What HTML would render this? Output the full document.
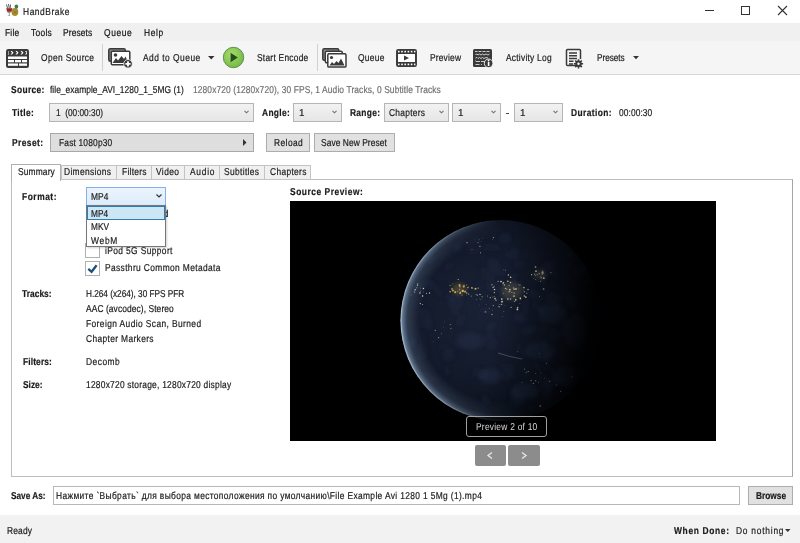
<!DOCTYPE html>
<html><head><meta charset="utf-8"><style>*{margin:0;padding:0;box-sizing:border-box}
html,body{width:800px;height:543px;overflow:hidden;background:#fff;font-family:"Liberation Sans",sans-serif;font-size:10px;color:#000}
.a{position:absolute;white-space:nowrap}
.t{font-size:10px;line-height:12px;text-rendering:geometricPrecision;-webkit-text-stroke:0.2px currentColor}
.r{position:absolute}
svg{position:absolute;overflow:visible}
</style></head><body>
<div class="r" style="left:0;top:0;width:800px;height:23px;background:#fff"></div>
<div class="r" style="left:0;top:23px;width:800px;height:18px;background:#f0f0f0"></div>
<div class="r" style="left:0;top:41px;width:800px;height:34px;background:#f5f5f5;border-bottom:1px solid #d7d7d7"></div>
<div class="r" style="left:0;top:515px;width:800px;height:28px;background:#f2f2f2"></div>
<svg style="left:5px;top:3px" width="15" height="15" viewBox="0 0 15 15">
<filter id="lb"><feGaussianBlur stdDeviation="0.35"/></filter>
<g filter="url(#lb)">
<path d="M1.5 1.5 L2.5 5 M3.5 1 L4.2 5 M5.5 1.5 L5.2 5" stroke="#5a5a5a" stroke-width="1"/>
<path d="M1.2 5 L7.5 5 L6.5 9 L4.6 10 L4.6 12.5 L6 13 L2.5 13 L3.8 12.5 L3.8 10 L2 9 Z" fill="#8a8a80"/>
<path d="M1.6 5.5 L7.2 5.5 L6.4 8.6 L2.3 8.6 Z" fill="#a8231f"/>
<ellipse cx="9.9" cy="9" rx="3.4" ry="3.9" fill="#a88e30"/>
<path d="M8.2 7.5 L11.5 10.8 M8.5 11 L11.8 7.7" stroke="#7d6820" stroke-width="0.6"/>
<ellipse cx="11.4" cy="3.6" rx="1.8" ry="2.2" fill="#3d7a52"/>
</g></svg>
<div class="a t" style="left:22.50px;top:6.50px;color:#1a1a1a;letter-spacing:0.666px;transform:scaleX(0.8400);transform-origin:0.00px 0;">HandBrake</div>

<div class="r" style="left:705px;top:10px;width:9px;height:1px;background:#333"></div>
<div class="r" style="left:741px;top:6px;width:9px;height:9px;border:1px solid #333"></div>
<svg style="left:778px;top:6px" width="9" height="9" viewBox="0 0 9 9"><path d="M0 0L9 9M9 0L0 9" stroke="#333" stroke-width="1.1"/></svg>
<div class="a t" style="left:5.00px;top:28.00px;color:#111;letter-spacing:0.285px;transform:scaleX(0.8400);transform-origin:0.00px 0;">File</div>

<div class="a t" style="left:31.25px;top:28.00px;color:#111;letter-spacing:0.341px;transform:scaleX(0.8400);transform-origin:0.00px 0;">Tools</div>

<div class="a t" style="left:63.25px;top:28.00px;color:#111;letter-spacing:0.154px;transform:scaleX(0.8400);transform-origin:0.00px 0;">Presets</div>

<div class="a t" style="left:104.25px;top:28.00px;color:#111;letter-spacing:0.754px;transform:scaleX(0.8400);transform-origin:0.00px 0;">Queue</div>

<div class="a t" style="left:143.75px;top:28.00px;color:#111;letter-spacing:0.782px;transform:scaleX(0.8400);transform-origin:0.00px 0;">Help</div>

<svg style="left:6px;top:49px" width="23" height="19" viewBox="0 0 23 19">
<rect x="0.75" y="0.75" width="21.5" height="17.5" rx="1.5" fill="#3a3a3a" stroke="#3a3a3a" stroke-width="1.5"/>
<g fill="#fff"><path d="M2 2.5h1v1h-1zM2 4.5h1v1h-1z"/>
<path d="M4.5 2 L6 2 L7.5 3.8 L6 5.6 L4.5 5.6 L6 3.8Z"/><path d="M9.5 2 L11 2 L12.5 3.8 L11 5.6 L9.5 5.6 L11 3.8Z"/>
<path d="M14.5 2 L16 2 L17.5 3.8 L16 5.6 L14.5 5.6 L16 3.8Z"/><path d="M19 2 L20.5 2 L21 3 L21 4.6 L20.5 5.6 L19 5.6 L20.5 3.8Z"/>
<rect x="2" y="7.5" width="19" height="2.5"/>
<rect x="2" y="11" width="6" height="2.3"/><rect x="9" y="11" width="6" height="2.3"/><rect x="16" y="11" width="5" height="2.3"/>
<rect x="2" y="14.5" width="10" height="2.3"/><rect x="13" y="14.5" width="8" height="2.3"/></g>
</svg>
<div class="a t" style="left:41.00px;top:53.00px;color:#1a1a1a;letter-spacing:0.417px;transform:scaleX(0.8400);transform-origin:0.00px 0;">Open Source</div>

<div class="r" style="left:102px;top:44px;width:1px;height:27px;background:#d0d0d0"></div>
<svg style="left:108px;top:48px" width="25" height="21" viewBox="0 0 25 21">
<rect x="0.8" y="0.8" width="16.5" height="12.5" rx="1.5" fill="#8a8a8a" stroke="#3a3a3a" stroke-width="1.5"/>
<rect x="3.3" y="3.3" width="18.5" height="13.5" rx="1" fill="#fff" stroke="#3a3a3a" stroke-width="1.5"/>
<circle cx="7.5" cy="7" r="1.8" fill="#3a3a3a"/>
<path d="M4.5 15 L8 10 L10 12.5 L13.5 8 L16 11 L17.5 8.5 L20.5 15Z" fill="#3a3a3a"/>
<circle cx="20" cy="15.8" r="4.3" fill="#3a3a3a" stroke="#f5f5f5" stroke-width="0.8"/>
<path d="M20 13.2v5.2M17.4 15.8h5.2" stroke="#fff" stroke-width="1.8"/>
</svg>
<div class="a t" style="left:143.25px;top:53.00px;color:#1a1a1a;letter-spacing:0.586px;transform:scaleX(0.8400);transform-origin:0.00px 0;">Add to Queue</div>

<svg style="left:208px;top:56px" width="7" height="4" viewBox="0 0 7 4"><path d="M0 0H6.5L3.25 3.5Z" fill="#333"/></svg>
<svg style="left:222px;top:46px" width="23" height="23" viewBox="0 0 23 23">
<defs><radialGradient id="gp" cx="0.4" cy="0.35" r="0.7"><stop offset="0" stop-color="#a6dc6c"/><stop offset="1" stop-color="#72b842"/></radialGradient></defs>
<circle cx="11.5" cy="11.5" r="10.2" fill="url(#gp)" stroke="#5f8f4a" stroke-width="1"/>
<path d="M8.6 6.8 L15.8 11.5 L8.6 16.2Z" fill="#264d1c"/>
</svg>
<div class="a t" style="left:257.00px;top:53.00px;color:#1a1a1a;letter-spacing:0.291px;transform:scaleX(0.8400);transform-origin:0.00px 0;">Start Encode</div>

<div class="r" style="left:317px;top:44px;width:1px;height:27px;background:#d0d0d0"></div>
<svg style="left:322px;top:48px" width="25" height="20" viewBox="0 0 25 20">
<rect x="0.8" y="0.8" width="16" height="11.5" rx="1.5" fill="#8a8a8a" stroke="#3a3a3a" stroke-width="1.5"/>
<rect x="3.3" y="3.3" width="17" height="11.5" rx="1.5" fill="#fff" stroke="#3a3a3a" stroke-width="1.5"/>
<rect x="5.8" y="5.8" width="18.2" height="13.3" rx="1.2" fill="#fff" stroke="#3a3a3a" stroke-width="1.5"/>
<circle cx="9.5" cy="9.5" r="1.6" fill="#3a3a3a"/>
<path d="M7.5 17.5 L10 14 L12 16 L14.5 13 L16.5 15 L19 10.5 L22.5 17.5Z" fill="#3a3a3a"/>
</svg>
<div class="a t" style="left:357.70px;top:53.00px;color:#1a1a1a;letter-spacing:0.322px;transform:scaleX(0.8400);transform-origin:0.00px 0;">Queue</div>

<svg style="left:396px;top:49px" width="21" height="18" viewBox="0 0 21 18">
<rect x="0.8" y="0.8" width="19.4" height="16.4" rx="1.5" fill="#3a3a3a" stroke="#3a3a3a" stroke-width="1.5"/>
<g fill="#fff"><rect x="2" y="1.8" width="1.6" height="1.6"/><rect x="5.2" y="1.8" width="1.6" height="1.6"/><rect x="8.4" y="1.8" width="1.6" height="1.6"/><rect x="11.6" y="1.8" width="1.6" height="1.6"/><rect x="14.8" y="1.8" width="1.6" height="1.6"/><rect x="18" y="1.8" width="1.4" height="1.6"/>
<rect x="2" y="14.6" width="1.6" height="1.6"/><rect x="5.2" y="14.6" width="1.6" height="1.6"/><rect x="8.4" y="14.6" width="1.6" height="1.6"/><rect x="11.6" y="14.6" width="1.6" height="1.6"/><rect x="14.8" y="14.6" width="1.6" height="1.6"/><rect x="18" y="14.6" width="1.4" height="1.6"/>
<rect x="2" y="5" width="17" height="8"/></g>
<path d="M8 6.5 L13 9 L8 11.5Z" fill="#3a3a3a"/>
</svg>
<div class="a t" style="left:430.00px;top:53.00px;color:#1a1a1a;letter-spacing:0.217px;transform:scaleX(0.8400);transform-origin:0.00px 0;">Preview</div>

<svg style="left:473px;top:49px" width="22" height="20" viewBox="0 0 22 20">
<rect x="0" y="0" width="19" height="18" rx="1.5" fill="#3a3a3a"/>
<g stroke="#ddd" stroke-width="0.9" fill="none"><path d="M2 2.5h2.5M5.5 2.5h3M9.5 2.5h3M13.5 2.5h3"/>
<path d="M2.5 5.5 L4 5 L5 6 L6.5 5 L8 6 L9.5 5 L11 6 L13 5 L15 6 L16.5 5"/>
<path d="M2.5 9 L4 8.5 L5 9.5 L6.5 8.5 L8 9.5 L9.5 8.5 L11 9.5 L13 8.5 L15 9"/>
<path d="M2.5 11.5 L3 12.5 L7 12.5 M8 12.5h4"/><path d="M2.5 15.5h4M8 15.5h1"/></g>
<circle cx="15.6" cy="14.3" r="4.3" fill="#3a3a3a" stroke="#f5f5f5" stroke-width="0.9"/>
<path d="M15.6 13v4" stroke="#fff" stroke-width="1.6"/><circle cx="15.6" cy="11.5" r="0.9" fill="#fff"/>
</svg>
<div class="a t" style="left:505.80px;top:53.00px;color:#1a1a1a;letter-spacing:0.287px;transform:scaleX(0.8400);transform-origin:0.00px 0;">Activity Log</div>

<svg style="left:565px;top:48px" width="22" height="21" viewBox="0 0 22 21">
<path d="M12 17.5 H2.5 Q1.5 17.5 1.5 16.5 V2.5 Q1.5 1.5 2.5 1.5 H14.5 Q15.5 1.5 15.5 2.5 V11" fill="none" stroke="#3a3a3a" stroke-width="1.5"/>
<g stroke="#3a3a3a" stroke-width="1.4"><path d="M4 5h8M4 7.8h8M4 10.5h8M4 13.3h4.5M4 16h4"/></g>
<g transform="translate(13.5 15.8)"><circle r="3.2" fill="#3a3a3a"/>
<g stroke="#3a3a3a" stroke-width="1.6"><path d="M0 -4.6V4.6M-4.6 0H4.6M-3.3 -3.3L3.3 3.3M3.3 -3.3L-3.3 3.3"/></g>
<circle r="1.2" fill="#fff"/></g>
</svg>
<div class="a t" style="left:597.30px;top:53.00px;color:#1a1a1a;letter-spacing:0.000px;transform:scaleX(0.8171);transform-origin:0.00px 0;">Presets</div>

<svg style="left:633px;top:56px" width="7" height="4" viewBox="0 0 7 4"><path d="M0 0H6L3 3.2Z" fill="#333"/></svg>
<div class="a t" style="left:11.25px;top:84.50px;color:#1a1a1a;letter-spacing:0.412px;transform:scaleX(0.8400);transform-origin:0.00px 0;font-weight:bold;">Source:</div>

<div class="a t" style="left:50.30px;top:84.50px;color:#1a1a1a;letter-spacing:0.031px;transform:scaleX(0.8400);transform-origin:0.00px 0;">file_example_AVI_1280_1_5MG (1)</div>

<div class="a t" style="left:193.00px;top:84.50px;color:#707070;letter-spacing:0.134px;transform:scaleX(0.8400);transform-origin:0.00px 0;">1280x720 (1280x720), 30 FPS, 1 Audio Tracks, 0 Subtitle Tracks</div>

<div class="a t" style="left:12.00px;top:108.00px;color:#1a1a1a;letter-spacing:0.437px;transform:scaleX(0.8400);transform-origin:0.00px 0;font-weight:bold;">Title:</div>

<div class="r" style="left:49px;top:103px;width:205px;height:19px;background:linear-gradient(#f2f2f2,#e6e6e6);border:1px solid #b5b5b5"></div><svg style="left:244.0px;top:110px" width="5" height="4" viewBox="0 0 5 4"><path d="M0.5 0.8L2.5 2.8L4.5 0.8" fill="none" stroke="#707070" stroke-width="1.1"/></svg>
<div class="a t" style="left:55.50px;top:108.00px;color:#1a1a1a;letter-spacing:0.000px;transform:scaleX(0.8289);transform-origin:0.00px 0;">1  (00:00:30)</div>

<div class="a t" style="left:261.75px;top:108.00px;color:#1a1a1a;letter-spacing:0.385px;transform:scaleX(0.8400);transform-origin:0.00px 0;font-weight:bold;">Angle:</div>

<div class="r" style="left:293px;top:103px;width:49px;height:19px;background:linear-gradient(#f2f2f2,#e6e6e6);border:1px solid #b5b5b5"></div><svg style="left:332.0px;top:110px" width="5" height="4" viewBox="0 0 5 4"><path d="M0.5 0.8L2.5 2.8L4.5 0.8" fill="none" stroke="#707070" stroke-width="1.1"/></svg>
<div class="a t" style="left:299.25px;top:108.00px;color:#1a1a1a;transform:scaleX(0.98);transform-origin:0 0;">1</div>

<div class="a t" style="left:350.00px;top:108.00px;color:#1a1a1a;letter-spacing:0.365px;transform:scaleX(0.8400);transform-origin:0.00px 0;font-weight:bold;">Range:</div>

<div class="r" style="left:384px;top:103px;width:64.5px;height:19px;background:linear-gradient(#f2f2f2,#e6e6e6);border:1px solid #b5b5b5"></div><svg style="left:438.5px;top:110px" width="5" height="4" viewBox="0 0 5 4"><path d="M0.5 0.8L2.5 2.8L4.5 0.8" fill="none" stroke="#707070" stroke-width="1.1"/></svg>
<div class="a t" style="left:389.00px;top:108.00px;color:#1a1a1a;letter-spacing:0.325px;transform:scaleX(0.8400);transform-origin:0.00px 0;">Chapters</div>

<div class="r" style="left:452px;top:103px;width:48.5px;height:19px;background:linear-gradient(#f2f2f2,#e6e6e6);border:1px solid #b5b5b5"></div><svg style="left:490.5px;top:110px" width="5" height="4" viewBox="0 0 5 4"><path d="M0.5 0.8L2.5 2.8L4.5 0.8" fill="none" stroke="#707070" stroke-width="1.1"/></svg>
<div class="a t" style="left:457.50px;top:108.00px;color:#1a1a1a;transform:scaleX(0.98);transform-origin:0 0;">1</div>

<div class="r" style="left:506px;top:113px;width:3px;height:1px;background:#444"></div>
<div class="r" style="left:514px;top:103px;width:49px;height:19px;background:linear-gradient(#f2f2f2,#e6e6e6);border:1px solid #b5b5b5"></div><svg style="left:553.0px;top:110px" width="5" height="4" viewBox="0 0 5 4"><path d="M0.5 0.8L2.5 2.8L4.5 0.8" fill="none" stroke="#707070" stroke-width="1.1"/></svg>
<div class="a t" style="left:520.00px;top:108.00px;color:#1a1a1a;transform:scaleX(0.98);transform-origin:0 0;">1</div>

<div class="a t" style="left:571.25px;top:108.00px;color:#1a1a1a;letter-spacing:0.472px;transform:scaleX(0.8400);transform-origin:0.00px 0;font-weight:bold;">Duration:</div>

<div class="a t" style="left:618.75px;top:108.00px;color:#1a1a1a;letter-spacing:0.093px;transform:scaleX(0.8400);transform-origin:0.00px 0;">00:00:30</div>

<div class="a t" style="left:12.00px;top:138.25px;color:#1a1a1a;letter-spacing:0.499px;transform:scaleX(0.8400);transform-origin:0.00px 0;font-weight:bold;">Preset:</div>

<div class="r" style="left:50px;top:133px;width:204px;height:19px;background:#dedede;border:1px solid #a8a8a8"></div>
<svg style="left:243px;top:139px" width="4" height="7" viewBox="0 0 4 7"><path d="M0 0L3.5 3.5L0 7Z" fill="#333"/></svg>
<div class="a t" style="left:58.75px;top:138.25px;color:#1a1a1a;letter-spacing:0.203px;transform:scaleX(0.8400);transform-origin:0.00px 0;">Fast 1080p30</div>

<div class="r" style="left:266px;top:133px;width:44px;height:19px;background:#e1e1e1;border:1px solid #adadad"></div>
<div class="a t" style="left:273.75px;top:138.25px;color:#1a1a1a;letter-spacing:0.507px;transform:scaleX(0.8400);transform-origin:0.00px 0;">Reload</div>

<div class="r" style="left:314px;top:133px;width:81px;height:19px;background:#e1e1e1;border:1px solid #adadad"></div>
<div class="a t" style="left:321.25px;top:138.25px;color:#1a1a1a;letter-spacing:0.072px;transform:scaleX(0.8400);transform-origin:0.00px 0;">Save New Preset</div>

<div class="r" style="left:11px;top:179px;width:782px;height:298px;background:#fff;border:1px solid #bdbdbd;border-right-color:#a5a5a5"></div>
<div class="r" style="left:60.6px;top:165px;width:56.8px;height:15px;background:#f0f0f0;border:1px solid #c4c4c4"></div>
<div class="a t" style="left:64.40px;top:167.20px;color:#1a1a1a;letter-spacing:0.412px;transform:scaleX(0.8400);transform-origin:0.00px 0;">Dimensions</div>

<div class="r" style="left:116.4px;top:165px;width:36.0px;height:15px;background:#f0f0f0;border:1px solid #c4c4c4"></div>
<div class="a t" style="left:121.60px;top:167.20px;color:#1a1a1a;letter-spacing:0.305px;transform:scaleX(0.8400);transform-origin:0.00px 0;">Filters</div>

<div class="r" style="left:151.4px;top:165px;width:34.0px;height:15px;background:#f0f0f0;border:1px solid #c4c4c4"></div>
<div class="a t" style="left:156.40px;top:167.20px;color:#1a1a1a;letter-spacing:0.495px;transform:scaleX(0.8400);transform-origin:0.00px 0;">Video</div>

<div class="r" style="left:184.4px;top:165px;width:36.0px;height:15px;background:#f0f0f0;border:1px solid #c4c4c4"></div>
<div class="a t" style="left:189.60px;top:167.20px;color:#1a1a1a;letter-spacing:0.867px;transform:scaleX(0.8400);transform-origin:0.00px 0;">Audio</div>

<div class="r" style="left:219.4px;top:165px;width:46.0px;height:15px;background:#f0f0f0;border:1px solid #c4c4c4"></div>
<div class="a t" style="left:224.40px;top:167.20px;color:#1a1a1a;letter-spacing:0.415px;transform:scaleX(0.8400);transform-origin:0.00px 0;">Subtitles</div>

<div class="r" style="left:264.4px;top:165px;width:47.0px;height:15px;background:#f0f0f0;border:1px solid #c4c4c4"></div>
<div class="a t" style="left:269.60px;top:167.20px;color:#1a1a1a;letter-spacing:0.393px;transform:scaleX(0.8400);transform-origin:0.00px 0;">Chapters</div>

<div class="r" style="left:11px;top:164px;width:50px;height:17px;background:#fff;border:1px solid #b0b0b0;border-bottom:none"></div>
<div class="a t" style="left:17.60px;top:167.20px;color:#1a1a1a;letter-spacing:0.172px;transform:scaleX(0.8400);transform-origin:0.00px 0;">Summary</div>

<div class="a t" style="left:21.70px;top:192.30px;color:#1a1a1a;letter-spacing:0.642px;transform:scaleX(0.8400);transform-origin:0.00px 0;font-weight:bold;">Format:</div>

<div class="a t" style="left:163.00px;top:208.60px;color:#1a1a1a;transform:scaleX(0.98);transform-origin:0 0;">d</div>

<div class="r" style="left:85px;top:243px;width:15px;height:15px;background:#fff;border:1px solid #b0b0b0"></div>
<div class="a t" style="left:104.90px;top:246.30px;color:#1a1a1a;letter-spacing:0.450px;transform:scaleX(0.8400);transform-origin:0.00px 0;">iPod 5G Support</div>

<div class="r" style="left:85px;top:261px;width:15px;height:15px;background:#fff;border:1px solid #b0b0b0"></div>
<svg style="left:86px;top:263px" width="13" height="12" viewBox="0 0 13 12"><path d="M2.3 5.8 L5.6 8.8 L10.6 2.3" fill="none" stroke="#1b4f7e" stroke-width="2.3"/></svg>
<div class="a t" style="left:104.90px;top:263.00px;color:#1a1a1a;letter-spacing:0.444px;transform:scaleX(0.8400);transform-origin:0.00px 0;">Passthru Common Metadata</div>

<div class="r" style="left:86px;top:187px;width:80px;height:19px;background:linear-gradient(#ecf4fc,#dcecfc);border:1px solid #7eb4ea"></div>
<svg style="left:156px;top:194px" width="6" height="4" viewBox="0 0 6 4"><path d="M0.5 0.5L3 3L5.5 0.5" fill="none" stroke="#333" stroke-width="1.2"/></svg>
<div class="a t" style="left:90.60px;top:192.30px;color:#1a1a1a;letter-spacing:0.077px;transform:scaleX(0.8400);transform-origin:0.00px 0;">MP4</div>

<div class="r" style="left:86px;top:205px;width:80px;height:42px;background:#fff;border:1px solid #777;box-shadow:1px 1px 2px rgba(0,0,0,0.18)"></div>
<div class="r" style="left:87px;top:206px;width:78px;height:14px;background:#cce6f6;border:1px solid #2f7db5"></div>
<div class="a t" style="left:90.70px;top:208.60px;color:#1a1a1a;letter-spacing:0.000px;transform:scaleX(0.8268);transform-origin:0.00px 0;">MP4</div>

<div class="a t" style="left:90.70px;top:222.20px;color:#1a1a1a;letter-spacing:0.000px;transform:scaleX(0.8260);transform-origin:0.00px 0;">MKV</div>

<div class="a t" style="left:90.70px;top:235.50px;color:#1a1a1a;letter-spacing:0.867px;transform:scaleX(0.8400);transform-origin:0.00px 0;">WebM</div>

<div class="a t" style="left:22.40px;top:288.90px;color:#1a1a1a;letter-spacing:0.036px;transform:scaleX(0.8400);transform-origin:0.00px 0;font-weight:bold;">Tracks:</div>

<div class="a t" style="left:22.50px;top:357.10px;color:#1a1a1a;letter-spacing:0.152px;transform:scaleX(0.8400);transform-origin:0.00px 0;font-weight:bold;">Filters:</div>

<div class="a t" style="left:22.50px;top:380.40px;color:#1a1a1a;letter-spacing:0.000px;transform:scaleX(0.8355);transform-origin:0.00px 0;font-weight:bold;">Size:</div>

<div class="a t" style="left:85.50px;top:288.90px;color:#1a1a1a;letter-spacing:0.000px;transform:scaleX(0.8218);transform-origin:0.00px 0;">H.264 (x264), 30 FPS PFR</div>

<div class="a t" style="left:85.50px;top:303.90px;color:#1a1a1a;letter-spacing:0.107px;transform:scaleX(0.8400);transform-origin:0.00px 0;">AAC (avcodec), Stereo</div>

<div class="a t" style="left:85.50px;top:318.90px;color:#1a1a1a;letter-spacing:0.478px;transform:scaleX(0.8400);transform-origin:0.00px 0;">Foreign Audio Scan, Burned</div>

<div class="a t" style="left:85.50px;top:333.90px;color:#1a1a1a;letter-spacing:0.421px;transform:scaleX(0.8400);transform-origin:0.00px 0;">Chapter Markers</div>

<div class="a t" style="left:85.50px;top:357.10px;color:#1a1a1a;letter-spacing:0.576px;transform:scaleX(0.8400);transform-origin:0.00px 0;">Decomb</div>

<div class="a t" style="left:85.50px;top:380.40px;color:#1a1a1a;letter-spacing:0.281px;transform:scaleX(0.8400);transform-origin:0.00px 0;">1280x720 storage, 1280x720 display</div>

<div class="a t" style="left:289.75px;top:186.75px;color:#1a1a1a;letter-spacing:0.628px;transform:scaleX(0.8400);transform-origin:0.00px 0;font-weight:bold;">Source Preview:</div>

<svg style="left:290px;top:201px" width="426" height="240" viewBox="0 0 426 240">
<rect width="426" height="240" fill="#000"/>
<defs>
<radialGradient id="eb" cx="0.4" cy="0.45" r="0.62"><stop offset="0" stop-color="#1a2236"/><stop offset="0.55" stop-color="#131a2a"/><stop offset="0.85" stop-color="#0c111c"/><stop offset="1" stop-color="#080b12"/></radialGradient>
<linearGradient id="dk" x1="0" y1="0" x2="1" y2="0.15"><stop offset="0.55" stop-color="#000" stop-opacity="0"/><stop offset="0.85" stop-color="#000" stop-opacity="0.5"/><stop offset="1" stop-color="#000" stop-opacity="0.9"/></linearGradient>
<radialGradient id="glow" cx="0.5" cy="0.5" r="0.5"><stop offset="0.8" stop-color="#50627a" stop-opacity="0"/><stop offset="0.93" stop-color="#50627a" stop-opacity="0.5"/><stop offset="0.98" stop-color="#7890ac" stop-opacity="0.85"/><stop offset="1" stop-color="#d0e6f6" stop-opacity="1"/></radialGradient>
<radialGradient id="lm" cx="0.0" cy="0.53" r="0.68"><stop offset="0" stop-color="#fff"/><stop offset="0.55" stop-color="#fff" stop-opacity="0.75"/><stop offset="1" stop-color="#fff" stop-opacity="0"/></radialGradient>
<mask id="mk"><rect x="100" y="10" width="230" height="230" fill="url(#lm)"/></mask>
<clipPath id="cp"><circle cx="211" cy="119.5" r="100.5"/></clipPath>
<filter id="bl"><feGaussianBlur stdDeviation="0.45"/></filter>
<filter id="bl2"><feGaussianBlur stdDeviation="2.2"/></filter>
<filter id="bl3"><feGaussianBlur stdDeviation="0.5"/></filter>
</defs>
<circle cx="211" cy="119.5" r="100.5" fill="url(#eb)"/>
<g clip-path="url(#cp)"><g filter="url(#bl2)"><ellipse cx="121.8" cy="92.3" rx="6.4" ry="2.6" transform="rotate(171 121.8 92.3)" fill="#2e3a58" opacity="0.07"/><ellipse cx="229.6" cy="63.4" rx="6.7" ry="3.7" transform="rotate(178 229.6 63.4)" fill="#2e3a58" opacity="0.10"/><ellipse cx="185.4" cy="80.7" rx="3.1" ry="1.6" transform="rotate(143 185.4 80.7)" fill="#2e3a58" opacity="0.11"/><ellipse cx="193.9" cy="47.3" rx="4.1" ry="1.6" transform="rotate(47 193.9 47.3)" fill="#2e3a58" opacity="0.11"/><ellipse cx="257.5" cy="69.2" rx="7.5" ry="5.9" transform="rotate(96 257.5 69.2)" fill="#2e3a58" opacity="0.10"/><ellipse cx="259.9" cy="187.4" rx="3.0" ry="2.1" transform="rotate(148 259.9 187.4)" fill="#2e3a58" opacity="0.18"/><ellipse cx="254.0" cy="144.0" rx="8.0" ry="2.8" transform="rotate(84 254.0 144.0)" fill="#2e3a58" opacity="0.13"/><ellipse cx="281.1" cy="99.1" rx="9.0" ry="4.1" transform="rotate(75 281.1 99.1)" fill="#2e3a58" opacity="0.17"/><ellipse cx="235.9" cy="105.1" rx="8.8" ry="3.6" transform="rotate(95 235.9 105.1)" fill="#2e3a58" opacity="0.14"/><ellipse cx="258.8" cy="192.2" rx="5.2" ry="2.4" transform="rotate(55 258.8 192.2)" fill="#2e3a58" opacity="0.07"/><ellipse cx="132.1" cy="136.1" rx="5.5" ry="3.6" transform="rotate(71 132.1 136.1)" fill="#2e3a58" opacity="0.07"/><ellipse cx="120.0" cy="141.9" rx="8.8" ry="5.5" transform="rotate(68 120.0 141.9)" fill="#2e3a58" opacity="0.06"/><ellipse cx="199.3" cy="74.5" rx="6.9" ry="3.7" transform="rotate(178 199.3 74.5)" fill="#2e3a58" opacity="0.06"/><ellipse cx="224.1" cy="78.2" rx="7.3" ry="3.3" transform="rotate(97 224.1 78.2)" fill="#2e3a58" opacity="0.11"/><ellipse cx="194.5" cy="172.4" rx="5.7" ry="3.6" transform="rotate(36 194.5 172.4)" fill="#2e3a58" opacity="0.10"/><ellipse cx="204.5" cy="65.2" rx="9.6" ry="5.6" transform="rotate(60 204.5 65.2)" fill="#2e3a58" opacity="0.16"/><ellipse cx="224.4" cy="93.8" rx="4.0" ry="1.4" transform="rotate(127 224.4 93.8)" fill="#2e3a58" opacity="0.15"/><ellipse cx="236.8" cy="174.2" rx="8.9" ry="5.3" transform="rotate(41 236.8 174.2)" fill="#2e3a58" opacity="0.07"/><ellipse cx="229.5" cy="147.5" rx="5.8" ry="2.0" transform="rotate(77 229.5 147.5)" fill="#2e3a58" opacity="0.19"/><ellipse cx="134.5" cy="114.1" rx="8.4" ry="5.9" transform="rotate(60 134.5 114.1)" fill="#2e3a58" opacity="0.11"/><ellipse cx="200.9" cy="125.7" rx="5.8" ry="3.8" transform="rotate(142 200.9 125.7)" fill="#2e3a58" opacity="0.20"/><ellipse cx="171.1" cy="56.7" rx="3.1" ry="1.5" transform="rotate(117 171.1 56.7)" fill="#2e3a58" opacity="0.11"/><ellipse cx="257.0" cy="155.8" rx="6.6" ry="4.6" transform="rotate(110 257.0 155.8)" fill="#2e3a58" opacity="0.18"/><ellipse cx="256.5" cy="189.5" rx="9.3" ry="5.4" transform="rotate(90 256.5 189.5)" fill="#2e3a58" opacity="0.11"/><ellipse cx="261.7" cy="182.1" rx="9.9" ry="5.5" transform="rotate(150 261.7 182.1)" fill="#2e3a58" opacity="0.16"/><ellipse cx="241.2" cy="207.1" rx="7.4" ry="2.9" transform="rotate(44 241.2 207.1)" fill="#2e3a58" opacity="0.07"/><ellipse cx="140.3" cy="82.8" rx="5.3" ry="4.1" transform="rotate(83 140.3 82.8)" fill="#2e3a58" opacity="0.11"/><ellipse cx="278.0" cy="185.6" rx="3.9" ry="3.0" transform="rotate(101 278.0 185.6)" fill="#2e3a58" opacity="0.14"/><ellipse cx="165.4" cy="101.4" rx="9.4" ry="7.5" transform="rotate(108 165.4 101.4)" fill="#2e3a58" opacity="0.17"/><ellipse cx="273.1" cy="179.8" rx="5.0" ry="3.8" transform="rotate(103 273.1 179.8)" fill="#2e3a58" opacity="0.09"/><ellipse cx="230.9" cy="83.5" rx="6.8" ry="2.3" transform="rotate(32 230.9 83.5)" fill="#2e3a58" opacity="0.06"/><ellipse cx="303.1" cy="111.7" rx="7.6" ry="3.5" transform="rotate(133 303.1 111.7)" fill="#2e3a58" opacity="0.15"/><ellipse cx="157.1" cy="169.2" rx="8.6" ry="2.7" transform="rotate(84 157.1 169.2)" fill="#2e3a58" opacity="0.09"/><ellipse cx="247.9" cy="165.8" rx="7.0" ry="2.7" transform="rotate(47 247.9 165.8)" fill="#2e3a58" opacity="0.13"/><ellipse cx="161.0" cy="96.8" rx="7.5" ry="2.4" transform="rotate(26 161.0 96.8)" fill="#2e3a58" opacity="0.15"/><ellipse cx="282.4" cy="100.6" rx="6.3" ry="3.2" transform="rotate(124 282.4 100.6)" fill="#2e3a58" opacity="0.15"/><ellipse cx="215.0" cy="36.9" rx="6.4" ry="5.1" transform="rotate(154 215.0 36.9)" fill="#2e3a58" opacity="0.18"/><ellipse cx="158.2" cy="153.5" rx="7.0" ry="5.2" transform="rotate(95 158.2 153.5)" fill="#2e3a58" opacity="0.13"/><ellipse cx="128.5" cy="157.1" rx="5.2" ry="1.7" transform="rotate(162 128.5 157.1)" fill="#2e3a58" opacity="0.16"/><ellipse cx="202.5" cy="46.3" rx="8.3" ry="3.7" transform="rotate(13 202.5 46.3)" fill="#2e3a58" opacity="0.14"/><ellipse cx="256.2" cy="164.4" rx="6.5" ry="3.2" transform="rotate(125 256.2 164.4)" fill="#2e3a58" opacity="0.07"/><ellipse cx="165.0" cy="111.9" rx="5.1" ry="2.6" transform="rotate(12 165.0 111.9)" fill="#2e3a58" opacity="0.09"/><ellipse cx="290.4" cy="69.7" rx="7.7" ry="5.6" transform="rotate(145 290.4 69.7)" fill="#2e3a58" opacity="0.12"/><ellipse cx="225.6" cy="200.6" rx="7.0" ry="5.2" transform="rotate(143 225.6 200.6)" fill="#2e3a58" opacity="0.07"/><ellipse cx="260.8" cy="168.5" rx="9.7" ry="2.9" transform="rotate(54 260.8 168.5)" fill="#2e3a58" opacity="0.09"/><ellipse cx="200.2" cy="140.8" rx="9.3" ry="6.6" transform="rotate(64 200.2 140.8)" fill="#2e3a58" opacity="0.12"/><ellipse cx="193.4" cy="109.1" rx="3.2" ry="2.4" transform="rotate(90 193.4 109.1)" fill="#2e3a58" opacity="0.10"/><ellipse cx="297.1" cy="81.2" rx="6.3" ry="2.5" transform="rotate(166 297.1 81.2)" fill="#2e3a58" opacity="0.10"/><ellipse cx="244.5" cy="93.9" rx="8.9" ry="4.2" transform="rotate(31 244.5 93.9)" fill="#2e3a58" opacity="0.13"/><ellipse cx="280.0" cy="54.1" rx="4.4" ry="2.7" transform="rotate(158 280.0 54.1)" fill="#2e3a58" opacity="0.09"/><ellipse cx="240.5" cy="129.1" rx="8.1" ry="3.7" transform="rotate(157 240.5 129.1)" fill="#2e3a58" opacity="0.19"/><ellipse cx="202.9" cy="85.4" rx="7.9" ry="6.1" transform="rotate(14 202.9 85.4)" fill="#2e3a58" opacity="0.12"/><ellipse cx="219.9" cy="171.6" rx="8.0" ry="3.2" transform="rotate(42 219.9 171.6)" fill="#2e3a58" opacity="0.09"/><ellipse cx="167.5" cy="46.7" rx="5.6" ry="3.5" transform="rotate(106 167.5 46.7)" fill="#2e3a58" opacity="0.18"/><ellipse cx="217.9" cy="171.3" rx="9.5" ry="6.0" transform="rotate(115 217.9 171.3)" fill="#2e3a58" opacity="0.10"/><ellipse cx="290.8" cy="170.1" rx="6.1" ry="3.4" transform="rotate(8 290.8 170.1)" fill="#2e3a58" opacity="0.13"/><ellipse cx="169.7" cy="89.8" rx="4.8" ry="3.3" transform="rotate(51 169.7 89.8)" fill="#2e3a58" opacity="0.07"/><ellipse cx="212.6" cy="72.2" rx="5.0" ry="2.8" transform="rotate(161 212.6 72.2)" fill="#2e3a58" opacity="0.09"/><ellipse cx="228.4" cy="118.1" rx="6.2" ry="4.2" transform="rotate(167 228.4 118.1)" fill="#2e3a58" opacity="0.11"/><ellipse cx="170.6" cy="119.6" rx="6.9" ry="4.3" transform="rotate(118 170.6 119.6)" fill="#2e3a58" opacity="0.11"/><ellipse cx="224.9" cy="52.4" rx="6.5" ry="4.7" transform="rotate(94 224.9 52.4)" fill="#2e3a58" opacity="0.16"/><ellipse cx="248.9" cy="107.5" rx="8.5" ry="3.2" transform="rotate(42 248.9 107.5)" fill="#2e3a58" opacity="0.15"/><ellipse cx="133.0" cy="150.3" rx="8.5" ry="5.9" transform="rotate(88 133.0 150.3)" fill="#2e3a58" opacity="0.09"/><ellipse cx="224.1" cy="190.9" rx="6.5" ry="2.1" transform="rotate(129 224.1 190.9)" fill="#2e3a58" opacity="0.14"/><ellipse cx="131.0" cy="80.4" rx="4.3" ry="1.6" transform="rotate(89 131.0 80.4)" fill="#2e3a58" opacity="0.06"/><ellipse cx="152.9" cy="144.9" rx="4.8" ry="3.4" transform="rotate(163 152.9 144.9)" fill="#2e3a58" opacity="0.07"/><ellipse cx="147.2" cy="90.1" rx="8.5" ry="3.6" transform="rotate(56 147.2 90.1)" fill="#2e3a58" opacity="0.08"/><ellipse cx="262.6" cy="133.5" rx="7.3" ry="4.1" transform="rotate(106 262.6 133.5)" fill="#2e3a58" opacity="0.10"/><ellipse cx="284.4" cy="165.1" rx="4.2" ry="1.8" transform="rotate(124 284.4 165.1)" fill="#2e3a58" opacity="0.08"/><ellipse cx="252.0" cy="45.5" rx="3.4" ry="1.7" transform="rotate(39 252.0 45.5)" fill="#2e3a58" opacity="0.11"/><ellipse cx="230.2" cy="115.8" rx="6.4" ry="4.4" transform="rotate(26 230.2 115.8)" fill="#2e3a58" opacity="0.20"/><ellipse cx="132.0" cy="142.4" rx="3.3" ry="1.4" transform="rotate(25 132.0 142.4)" fill="#2e3a58" opacity="0.18"/><ellipse cx="170.3" cy="152.0" rx="6.0" ry="2.0" transform="rotate(179 170.3 152.0)" fill="#2e3a58" opacity="0.06"/><ellipse cx="217.6" cy="38.1" rx="4.6" ry="2.0" transform="rotate(44 217.6 38.1)" fill="#2e3a58" opacity="0.14"/><ellipse cx="121.6" cy="141.7" rx="5.5" ry="2.6" transform="rotate(110 121.6 141.7)" fill="#2e3a58" opacity="0.20"/><ellipse cx="269.7" cy="134.4" rx="7.5" ry="2.5" transform="rotate(125 269.7 134.4)" fill="#2e3a58" opacity="0.11"/><ellipse cx="259.1" cy="64.2" rx="9.2" ry="4.9" transform="rotate(152 259.1 64.2)" fill="#2e3a58" opacity="0.12"/><ellipse cx="149.2" cy="176.8" rx="4.5" ry="2.1" transform="rotate(99 149.2 176.8)" fill="#2e3a58" opacity="0.09"/><ellipse cx="233.2" cy="156.4" rx="4.5" ry="2.4" transform="rotate(80 233.2 156.4)" fill="#2e3a58" opacity="0.10"/><ellipse cx="289.5" cy="116.0" rx="9.0" ry="3.6" transform="rotate(13 289.5 116.0)" fill="#2e3a58" opacity="0.11"/><ellipse cx="190.2" cy="66.0" rx="4.9" ry="1.5" transform="rotate(47 190.2 66.0)" fill="#2e3a58" opacity="0.09"/><ellipse cx="139.4" cy="176.7" rx="8.0" ry="3.5" transform="rotate(28 139.4 176.7)" fill="#2e3a58" opacity="0.11"/><ellipse cx="263.6" cy="97.2" rx="8.4" ry="5.5" transform="rotate(4 263.6 97.2)" fill="#2e3a58" opacity="0.19"/><ellipse cx="185.2" cy="172.7" rx="3.6" ry="2.7" transform="rotate(139 185.2 172.7)" fill="#2e3a58" opacity="0.11"/><ellipse cx="188.8" cy="116.8" rx="5.8" ry="2.4" transform="rotate(27 188.8 116.8)" fill="#2e3a58" opacity="0.07"/><ellipse cx="196.9" cy="109.9" rx="5.2" ry="2.7" transform="rotate(24 196.9 109.9)" fill="#2e3a58" opacity="0.14"/><ellipse cx="197.8" cy="72.7" rx="8.1" ry="5.1" transform="rotate(37 197.8 72.7)" fill="#2e3a58" opacity="0.08"/><ellipse cx="195.8" cy="198.5" rx="5.8" ry="2.9" transform="rotate(41 195.8 198.5)" fill="#2e3a58" opacity="0.18"/><ellipse cx="196.4" cy="173.6" rx="4.5" ry="1.4" transform="rotate(113 196.4 173.6)" fill="#2e3a58" opacity="0.06"/><ellipse cx="132.4" cy="85.1" rx="9.8" ry="4.4" transform="rotate(165 132.4 85.1)" fill="#2e3a58" opacity="0.15"/><ellipse cx="227.7" cy="196.9" rx="7.7" ry="6.0" transform="rotate(42 227.7 196.9)" fill="#2e3a58" opacity="0.18"/><ellipse cx="191.7" cy="98.4" rx="6.0" ry="3.0" transform="rotate(69 191.7 98.4)" fill="#2e3a58" opacity="0.07"/><ellipse cx="179.4" cy="178.8" rx="5.0" ry="1.9" transform="rotate(86 179.4 178.8)" fill="#2e3a58" opacity="0.12"/><ellipse cx="249.9" cy="186.8" rx="4.7" ry="1.6" transform="rotate(76 249.9 186.8)" fill="#2e3a58" opacity="0.11"/><ellipse cx="253.5" cy="178.6" rx="7.9" ry="4.6" transform="rotate(4 253.5 178.6)" fill="#2e3a58" opacity="0.16"/><ellipse cx="166.4" cy="155.9" rx="3.4" ry="1.7" transform="rotate(89 166.4 155.9)" fill="#2e3a58" opacity="0.07"/><ellipse cx="154.9" cy="86.1" rx="5.3" ry="2.3" transform="rotate(62 154.9 86.1)" fill="#2e3a58" opacity="0.06"/><ellipse cx="266.6" cy="74.2" rx="4.8" ry="3.1" transform="rotate(84 266.6 74.2)" fill="#2e3a58" opacity="0.09"/><ellipse cx="141.1" cy="57.9" rx="5.5" ry="3.3" transform="rotate(139 141.1 57.9)" fill="#2e3a58" opacity="0.19"/><ellipse cx="158.6" cy="65.7" rx="5.9" ry="3.0" transform="rotate(149 158.6 65.7)" fill="#2e3a58" opacity="0.10"/><ellipse cx="253.8" cy="79.0" rx="9.4" ry="3.0" transform="rotate(91 253.8 79.0)" fill="#2e3a58" opacity="0.08"/><ellipse cx="190.4" cy="172.9" rx="9.8" ry="3.7" transform="rotate(41 190.4 172.9)" fill="#2e3a58" opacity="0.09"/><ellipse cx="191.3" cy="77.7" rx="3.0" ry="1.7" transform="rotate(43 191.3 77.7)" fill="#2e3a58" opacity="0.12"/><ellipse cx="134.2" cy="122.7" rx="6.8" ry="4.2" transform="rotate(150 134.2 122.7)" fill="#2e3a58" opacity="0.14"/><ellipse cx="265.0" cy="108.6" rx="5.4" ry="4.0" transform="rotate(129 265.0 108.6)" fill="#2e3a58" opacity="0.10"/><ellipse cx="184.3" cy="45.2" rx="9.7" ry="6.9" transform="rotate(112 184.3 45.2)" fill="#2e3a58" opacity="0.08"/><ellipse cx="139.5" cy="123.8" rx="5.6" ry="2.5" transform="rotate(96 139.5 123.8)" fill="#2e3a58" opacity="0.16"/><ellipse cx="214.9" cy="166.9" rx="5.3" ry="2.1" transform="rotate(23 214.9 166.9)" fill="#2e3a58" opacity="0.13"/><ellipse cx="234.0" cy="129.2" rx="3.7" ry="2.4" transform="rotate(81 234.0 129.2)" fill="#2e3a58" opacity="0.08"/><ellipse cx="220.0" cy="54.0" rx="4.1" ry="3.0" transform="rotate(10 220.0 54.0)" fill="#2e3a58" opacity="0.18"/></g><g filter="url(#bl2)" fill="#2c3852" opacity="0.35"><ellipse cx="262" cy="112" rx="14" ry="10"/><ellipse cx="285" cy="130" rx="12" ry="16"/><ellipse cx="250" cy="150" rx="16" ry="9"/><ellipse cx="275" cy="175" rx="12" ry="10"/><ellipse cx="235" cy="190" rx="14" ry="8"/><ellipse cx="180" cy="140" rx="14" ry="9"/><ellipse cx="200" cy="175" rx="12" ry="8"/></g></g>
<g mask="url(#mk)" filter="url(#bl3)"><circle cx="211" cy="119.5" r="100.5" fill="url(#glow)"/></g>
<g filter="url(#bl2)" opacity="0.35"><ellipse cx="169" cy="88" rx="7" ry="6" fill="#a08040"/><ellipse cx="222" cy="90" rx="11" ry="9" fill="#807860"/><ellipse cx="250" cy="74" rx="6" ry="5" fill="#807860"/></g><g filter="url(#bl)"><circle cx="162.9" cy="89.5" r="1.05" fill="#f0c868" opacity="0.73"/><circle cx="162.4" cy="87.7" r="0.55" fill="#f0c868" opacity="0.76"/><circle cx="162.9" cy="82.8" r="0.49" fill="#f0c868" opacity="0.65"/><circle cx="176.7" cy="91.9" r="0.90" fill="#f0c868" opacity="0.52"/><circle cx="181.9" cy="86.8" r="0.87" fill="#f0c868" opacity="0.81"/><circle cx="169.5" cy="88.6" r="0.78" fill="#f0c868" opacity="0.53"/><circle cx="170.4" cy="90.8" r="0.45" fill="#f0c868" opacity="0.73"/><circle cx="160.1" cy="90.8" r="0.78" fill="#f0c868" opacity="0.82"/><circle cx="161.6" cy="88.0" r="0.74" fill="#f0c868" opacity="0.64"/><circle cx="185.5" cy="87.8" r="1.00" fill="#f0c868" opacity="0.85"/><circle cx="167.6" cy="90.6" r="0.62" fill="#f0c868" opacity="0.54"/><circle cx="169.5" cy="84.0" r="1.00" fill="#f0c868" opacity="0.69"/><circle cx="178.4" cy="86.0" r="0.43" fill="#f0c868" opacity="0.60"/><circle cx="173.8" cy="85.6" r="1.09" fill="#f0c868" opacity="0.70"/><circle cx="175.3" cy="90.5" r="0.95" fill="#f0c868" opacity="0.63"/><circle cx="172.8" cy="89.9" r="1.08" fill="#f0c868" opacity="0.88"/><circle cx="171.8" cy="90.0" r="0.49" fill="#f0c868" opacity="0.53"/><circle cx="169.9" cy="85.6" r="0.81" fill="#f0c868" opacity="0.72"/><circle cx="172.0" cy="94.0" r="0.51" fill="#f0c868" opacity="0.82"/><circle cx="172.9" cy="90.8" r="0.57" fill="#f0c868" opacity="0.63"/><circle cx="177.9" cy="86.7" r="0.63" fill="#f0c868" opacity="0.94"/><circle cx="170.2" cy="91.9" r="1.01" fill="#f0c868" opacity="0.82"/><circle cx="181.2" cy="95.1" r="0.57" fill="#f0c868" opacity="0.63"/><circle cx="169.6" cy="84.5" r="0.63" fill="#f0c868" opacity="0.54"/><circle cx="174.6" cy="90.8" r="0.59" fill="#f0c868" opacity="0.80"/><circle cx="165.2" cy="91.2" r="1.08" fill="#f0c868" opacity="0.74"/><circle cx="160.0" cy="84.4" r="0.55" fill="#f0c868" opacity="0.58"/><circle cx="176.7" cy="84.0" r="0.59" fill="#f0c868" opacity="0.59"/><circle cx="168.2" cy="78.5" r="0.56" fill="#f0c868" opacity="0.98"/><circle cx="174.0" cy="84.3" r="0.71" fill="#f0c868" opacity="0.55"/><circle cx="249.4" cy="95.4" r="0.48" fill="#f0e0b0" opacity="0.85"/><circle cx="221.1" cy="106.4" r="0.68" fill="#f0e0b0" opacity="0.65"/><circle cx="229.9" cy="102.5" r="0.39" fill="#f0e0b0" opacity="0.61"/><circle cx="202.0" cy="83.7" r="0.69" fill="#f0e0b0" opacity="0.64"/><circle cx="228.5" cy="87.1" r="0.36" fill="#f0e0b0" opacity="0.63"/><circle cx="218.3" cy="91.0" r="0.45" fill="#f0e0b0" opacity="0.68"/><circle cx="216.7" cy="88.0" r="0.55" fill="#f0e0b0" opacity="0.95"/><circle cx="238.0" cy="88.4" r="0.74" fill="#f0e0b0" opacity="0.79"/><circle cx="223.9" cy="91.8" r="0.36" fill="#f0e0b0" opacity="0.96"/><circle cx="213.4" cy="68.5" r="0.36" fill="#f0e0b0" opacity="0.82"/><circle cx="204.3" cy="91.6" r="0.53" fill="#f0e0b0" opacity="1.00"/><circle cx="234.3" cy="95.0" r="0.76" fill="#f0e0b0" opacity="0.95"/><circle cx="220.6" cy="76.3" r="0.79" fill="#f0e0b0" opacity="0.96"/><circle cx="212.0" cy="100.7" r="0.85" fill="#f0e0b0" opacity="0.94"/><circle cx="205.1" cy="97.7" r="0.83" fill="#f0e0b0" opacity="0.79"/><circle cx="214.4" cy="83.9" r="0.68" fill="#f0e0b0" opacity="0.80"/><circle cx="235.8" cy="96.1" r="0.91" fill="#f0e0b0" opacity="0.94"/><circle cx="220.5" cy="81.4" r="0.76" fill="#f0e0b0" opacity="0.79"/><circle cx="202.4" cy="96.1" r="0.40" fill="#f0e0b0" opacity="0.88"/><circle cx="236.7" cy="92.2" r="0.62" fill="#f0e0b0" opacity="0.62"/><circle cx="217.9" cy="80.2" r="0.69" fill="#f0e0b0" opacity="0.96"/><circle cx="221.9" cy="91.3" r="0.52" fill="#f0e0b0" opacity="0.84"/><circle cx="224.0" cy="95.1" r="0.86" fill="#f0e0b0" opacity="0.83"/><circle cx="200.3" cy="96.6" r="0.53" fill="#f0e0b0" opacity="0.83"/><circle cx="225.7" cy="98.9" r="0.80" fill="#f0e0b0" opacity="0.96"/><circle cx="229.9" cy="84.1" r="0.68" fill="#f0e0b0" opacity="0.66"/><circle cx="230.4" cy="97.8" r="0.82" fill="#f0e0b0" opacity="0.92"/><circle cx="215.5" cy="69.1" r="0.51" fill="#f0e0b0" opacity="0.58"/><circle cx="213.6" cy="92.2" r="0.47" fill="#f0e0b0" opacity="0.71"/><circle cx="213.0" cy="82.7" r="0.53" fill="#f0e0b0" opacity="0.92"/><circle cx="234.0" cy="88.9" r="0.39" fill="#f0e0b0" opacity="0.52"/><circle cx="224.2" cy="88.2" r="0.75" fill="#f0e0b0" opacity="0.79"/><circle cx="214.9" cy="104.5" r="0.36" fill="#f0e0b0" opacity="0.57"/><circle cx="219.6" cy="90.6" r="0.81" fill="#f0e0b0" opacity="0.62"/><circle cx="224.2" cy="92.1" r="0.70" fill="#f0e0b0" opacity="0.72"/><circle cx="211.0" cy="80.6" r="0.80" fill="#f0e0b0" opacity="0.98"/><circle cx="219.1" cy="84.6" r="0.62" fill="#f0e0b0" opacity="0.59"/><circle cx="234.4" cy="90.7" r="0.75" fill="#f0e0b0" opacity="0.59"/><circle cx="220.6" cy="98.0" r="0.74" fill="#f0e0b0" opacity="0.76"/><circle cx="208.1" cy="80.3" r="0.57" fill="#f0e0b0" opacity="0.90"/><circle cx="225.9" cy="87.9" r="0.87" fill="#f0e0b0" opacity="0.86"/><circle cx="230.3" cy="97.0" r="0.70" fill="#f0e0b0" opacity="0.95"/><circle cx="211.8" cy="98.0" r="0.84" fill="#f0e0b0" opacity="0.90"/><circle cx="233.5" cy="86.6" r="0.71" fill="#f0e0b0" opacity="0.60"/><circle cx="218.4" cy="74.0" r="0.71" fill="#f0e0b0" opacity="0.86"/><circle cx="227.4" cy="108.4" r="0.90" fill="#f0e0b0" opacity="0.99"/><circle cx="203.1" cy="86.4" r="0.53" fill="#f0e0b0" opacity="0.95"/><circle cx="228.3" cy="83.6" r="0.40" fill="#f0e0b0" opacity="0.72"/><circle cx="204.1" cy="85.3" r="0.62" fill="#f0e0b0" opacity="0.51"/><circle cx="223.5" cy="87.0" r="0.80" fill="#f0e0b0" opacity="0.59"/><circle cx="212.1" cy="103.3" r="0.43" fill="#f0e0b0" opacity="0.57"/><circle cx="204.5" cy="88.5" r="0.82" fill="#f0e0b0" opacity="0.84"/><circle cx="234.1" cy="86.6" r="0.88" fill="#f0e0b0" opacity="0.54"/><circle cx="224.4" cy="100.6" r="0.51" fill="#f0e0b0" opacity="0.86"/><circle cx="213.4" cy="81.8" r="0.82" fill="#f0e0b0" opacity="0.78"/><circle cx="217.9" cy="98.0" r="0.82" fill="#f0e0b0" opacity="0.95"/><circle cx="227.6" cy="106.6" r="0.89" fill="#f0e0b0" opacity="0.76"/><circle cx="215.4" cy="87.4" r="0.65" fill="#f0e0b0" opacity="0.75"/><circle cx="219.9" cy="88.7" r="0.89" fill="#f0e0b0" opacity="0.76"/><circle cx="206.0" cy="99.2" r="0.67" fill="#f0e0b0" opacity="0.75"/><circle cx="249.3" cy="72.6" r="0.70" fill="#f0e4c0" opacity="0.71"/><circle cx="260.9" cy="71.6" r="0.54" fill="#f0e4c0" opacity="0.74"/><circle cx="253.7" cy="77.1" r="0.86" fill="#f0e4c0" opacity="0.95"/><circle cx="245.7" cy="74.5" r="0.49" fill="#f0e4c0" opacity="0.81"/><circle cx="252.3" cy="73.0" r="0.84" fill="#f0e4c0" opacity="0.51"/><circle cx="251.2" cy="76.7" r="0.79" fill="#f0e4c0" opacity="0.66"/><circle cx="245.7" cy="78.4" r="0.44" fill="#f0e4c0" opacity="0.87"/><circle cx="254.3" cy="77.3" r="0.53" fill="#f0e4c0" opacity="0.60"/><circle cx="244.7" cy="73.2" r="0.60" fill="#f0e4c0" opacity="0.71"/><circle cx="247.1" cy="73.6" r="0.50" fill="#f0e4c0" opacity="0.82"/><circle cx="246.0" cy="70.2" r="0.89" fill="#f0e4c0" opacity="0.81"/><circle cx="252.3" cy="71.7" r="0.82" fill="#f0e4c0" opacity="0.91"/><circle cx="253.6" cy="72.0" r="0.56" fill="#f0e4c0" opacity="0.96"/><circle cx="253.6" cy="88.0" r="0.91" fill="#f0e4c0" opacity="0.57"/><circle cx="250.5" cy="80.4" r="0.53" fill="#f0e4c0" opacity="0.55"/><circle cx="252.6" cy="70.4" r="0.85" fill="#f0e4c0" opacity="0.56"/><circle cx="243.8" cy="77.5" r="0.39" fill="#f0e4c0" opacity="0.60"/><circle cx="245.5" cy="66.0" r="0.96" fill="#f0e4c0" opacity="0.56"/><circle cx="241.6" cy="73.8" r="0.68" fill="#f0e4c0" opacity="0.84"/><circle cx="250.7" cy="75.4" r="0.44" fill="#f0e4c0" opacity="0.52"/><circle cx="124.2" cy="90.2" r="0.57" fill="#d8d4c0" opacity="0.57"/><circle cx="132.6" cy="95.0" r="0.70" fill="#d8d4c0" opacity="1.00"/><circle cx="133.4" cy="91.0" r="0.33" fill="#d8d4c0" opacity="0.98"/><circle cx="121.1" cy="93.9" r="0.46" fill="#d8d4c0" opacity="0.73"/><circle cx="124.7" cy="91.5" r="0.59" fill="#d8d4c0" opacity="0.51"/><circle cx="127.5" cy="83.2" r="0.39" fill="#d8d4c0" opacity="0.73"/><circle cx="130.6" cy="87.1" r="0.39" fill="#d8d4c0" opacity="0.58"/><circle cx="129.9" cy="91.9" r="0.73" fill="#d8d4c0" opacity="0.90"/><circle cx="127.7" cy="82.9" r="0.60" fill="#d8d4c0" opacity="0.70"/><circle cx="125.2" cy="88.7" r="0.77" fill="#d8d4c0" opacity="0.90"/><circle cx="130.3" cy="102.6" r="0.66" fill="#d8d4c0" opacity="0.89"/><circle cx="133.4" cy="87.5" r="0.73" fill="#d8d4c0" opacity="0.94"/><circle cx="127.5" cy="84.3" r="0.67" fill="#d8d4c0" opacity="0.70"/><circle cx="130.6" cy="90.2" r="0.46" fill="#d8d4c0" opacity="0.73"/><circle cx="136.6" cy="92.3" r="0.61" fill="#d8d4c0" opacity="0.81"/><circle cx="132.6" cy="103.5" r="0.62" fill="#d8d4c0" opacity="0.67"/><circle cx="126.8" cy="86.7" r="0.56" fill="#d8d4c0" opacity="0.69"/><circle cx="139.6" cy="92.0" r="0.64" fill="#d8d4c0" opacity="0.88"/><circle cx="192.1" cy="95.8" r="0.50" fill="#d8d0b0" opacity="0.87"/><circle cx="189.6" cy="104.1" r="0.27" fill="#d8d0b0" opacity="0.60"/><circle cx="186.8" cy="98.6" r="0.35" fill="#d8d0b0" opacity="0.95"/><circle cx="178.7" cy="93.1" r="0.64" fill="#d8d0b0" opacity="0.78"/><circle cx="204.2" cy="95.6" r="0.57" fill="#d8d0b0" opacity="0.54"/><circle cx="176.2" cy="88.2" r="0.27" fill="#d8d0b0" opacity="0.97"/><circle cx="196.1" cy="103.6" r="0.32" fill="#d8d0b0" opacity="0.75"/><circle cx="187.3" cy="94.2" r="0.63" fill="#d8d0b0" opacity="0.71"/><circle cx="176.7" cy="94.2" r="0.40" fill="#d8d0b0" opacity="0.64"/><circle cx="182.8" cy="87.5" r="0.36" fill="#d8d0b0" opacity="0.86"/><circle cx="189.5" cy="97.3" r="0.35" fill="#d8d0b0" opacity="0.52"/><circle cx="199.3" cy="107.2" r="0.41" fill="#d8d0b0" opacity="0.95"/><circle cx="190.0" cy="93.4" r="0.65" fill="#d8d0b0" opacity="0.97"/><circle cx="209.4" cy="103.7" r="0.42" fill="#d8d0b0" opacity="0.74"/><circle cx="197.4" cy="95.0" r="0.46" fill="#d8d0b0" opacity="0.97"/><circle cx="188.1" cy="87.1" r="0.64" fill="#d8d0b0" opacity="0.91"/><circle cx="186.1" cy="93.6" r="0.50" fill="#d8d0b0" opacity="0.73"/><circle cx="190.9" cy="98.5" r="0.46" fill="#d8d0b0" opacity="0.56"/><circle cx="231.9" cy="181.4" r="0.48" fill="#d8d8d8" opacity="0.63"/><circle cx="238.2" cy="170.6" r="0.62" fill="#d8d8d8" opacity="0.77"/><circle cx="282.1" cy="175.6" r="0.60" fill="#d8d8d8" opacity="0.62"/><circle cx="270.7" cy="190.4" r="0.62" fill="#d8d8d8" opacity="0.81"/><circle cx="243.4" cy="182.4" r="0.58" fill="#d8d8d8" opacity="0.78"/><circle cx="234.6" cy="168.0" r="0.61" fill="#d8d8d8" opacity="0.59"/><circle cx="250.2" cy="205.0" r="0.68" fill="#d8d8d8" opacity="0.94"/><circle cx="254.5" cy="176.9" r="0.39" fill="#d8d8d8" opacity="0.71"/><circle cx="245.7" cy="172.6" r="0.51" fill="#d8d8d8" opacity="0.54"/><circle cx="266.7" cy="184.1" r="0.52" fill="#d8d8d8" opacity="0.82"/><circle cx="239.6" cy="184.5" r="0.37" fill="#d8d8d8" opacity="0.67"/><circle cx="249.2" cy="156.1" r="0.31" fill="#d8d8d8" opacity="0.56"/><circle cx="256.6" cy="162.5" r="0.61" fill="#d8d8d8" opacity="0.61"/><circle cx="241.1" cy="179.7" r="0.63" fill="#d8d8d8" opacity="0.68"/><circle cx="227.7" cy="150.3" r="0.42" fill="#d8d8d8" opacity="0.77"/><circle cx="249.3" cy="152.6" r="0.46" fill="#d8d8d8" opacity="0.68"/><circle cx="271.7" cy="188.1" r="0.31" fill="#d8d8d8" opacity="0.54"/><circle cx="236.2" cy="171.3" r="0.58" fill="#d8d8d8" opacity="0.65"/><circle cx="250.8" cy="171.9" r="0.37" fill="#d8d8d8" opacity="0.83"/><circle cx="259.6" cy="180.3" r="0.59" fill="#d8d8d8" opacity="0.85"/><circle cx="248.5" cy="181.7" r="0.43" fill="#d8d8d8" opacity="0.86"/><circle cx="245.7" cy="179.9" r="0.59" fill="#d8d8d8" opacity="0.78"/><circle cx="203.5" cy="36.6" r="0.62" fill="#c8c8c0" opacity="0.72"/><circle cx="189.2" cy="38.8" r="0.38" fill="#c8c8c0" opacity="0.70"/><circle cx="202.6" cy="38.6" r="0.35" fill="#c8c8c0" opacity="0.68"/><circle cx="182.0" cy="48.5" r="0.41" fill="#c8c8c0" opacity="0.69"/><circle cx="190.5" cy="51.8" r="0.57" fill="#c8c8c0" opacity="0.77"/><circle cx="192.3" cy="37.0" r="0.32" fill="#c8c8c0" opacity="0.88"/><circle cx="191.8" cy="40.5" r="0.26" fill="#c8c8c0" opacity="0.76"/><circle cx="177.0" cy="41.7" r="0.64" fill="#c8c8c0" opacity="0.83"/><circle cx="188.0" cy="41.8" r="0.47" fill="#c8c8c0" opacity="0.89"/><circle cx="189.9" cy="45.3" r="0.54" fill="#c8c8c0" opacity="0.95"/><circle cx="212.3" cy="115.5" r="0.31" fill="#e0d8b0" opacity="0.87"/><circle cx="202.3" cy="109.1" r="0.34" fill="#e0d8b0" opacity="0.88"/><circle cx="194.9" cy="110.9" r="0.41" fill="#e0d8b0" opacity="0.67"/><circle cx="213.8" cy="110.6" r="0.45" fill="#e0d8b0" opacity="0.77"/><circle cx="203.3" cy="104.6" r="0.62" fill="#e0d8b0" opacity="0.71"/><circle cx="209.1" cy="105.7" r="0.59" fill="#e0d8b0" opacity="0.90"/><circle cx="211.3" cy="103.3" r="0.63" fill="#e0d8b0" opacity="0.82"/><circle cx="195.7" cy="110.9" r="0.57" fill="#e0d8b0" opacity="0.71"/><circle cx="202.0" cy="113.3" r="0.55" fill="#e0d8b0" opacity="1.00"/><circle cx="202.4" cy="114.0" r="0.33" fill="#e0d8b0" opacity="0.71"/><circle cx="143.1" cy="140.4" r="0.27" fill="#c8c8c0" opacity="0.65"/><circle cx="160.9" cy="127.6" r="0.56" fill="#c8c8c0" opacity="0.59"/><circle cx="160.2" cy="123.4" r="0.48" fill="#c8c8c0" opacity="0.95"/><circle cx="154.7" cy="120.9" r="0.32" fill="#c8c8c0" opacity="0.61"/><circle cx="151.5" cy="132.7" r="0.49" fill="#c8c8c0" opacity="0.61"/><circle cx="153.2" cy="126.0" r="0.32" fill="#c8c8c0" opacity="0.88"/><circle cx="145.2" cy="129.3" r="0.58" fill="#c8c8c0" opacity="0.74"/><circle cx="148.6" cy="136.7" r="0.62" fill="#c8c8c0" opacity="0.67"/><path d="M208 152 Q220 156 232 158" stroke="#c8d0d8" stroke-width="0.7" fill="none" opacity="0.45"/></g>
<circle cx="211" cy="119.5" r="101.5" fill="url(#dk)"/>
</svg>
<div class="r" style="left:466px;top:416px;width:81px;height:21px;background:rgba(0,0,0,0.6);border:1px solid #a0a0a0;border-radius:3px"></div>
<div class="a t" style="left:476.40px;top:422.10px;color:#d8d8d8;letter-spacing:0.289px;transform:scaleX(0.8400);transform-origin:0.00px 0;-webkit-text-stroke:0;">Preview 2 of 10</div>

<div class="r" style="left:475px;top:445px;width:31px;height:21px;background:#8c8c8c;border-radius:2px"></div>
<div class="r" style="left:508px;top:445px;width:32px;height:21px;background:#8c8c8c;border-radius:2px"></div>
<svg style="left:487px;top:452px" width="6" height="7" viewBox="0 0 6 7"><path d="M5 0.5L1 3.5L5 6.5" fill="none" stroke="#e8e8e8" stroke-width="1.3"/></svg>
<svg style="left:521px;top:452px" width="6" height="7" viewBox="0 0 6 7"><path d="M1 0.5L5 3.5L1 6.5" fill="none" stroke="#e8e8e8" stroke-width="1.3"/></svg>
<div class="a t" style="left:11.25px;top:491.25px;color:#1a1a1a;letter-spacing:0.000px;transform:scaleX(0.8238);transform-origin:0.00px 0;font-weight:bold;">Save As:</div>

<div class="r" style="left:53px;top:486px;width:687px;height:19px;background:#fff;border:1px solid #b8b8b8"></div>
<div class="a t" style="left:56.25px;top:491.25px;color:#1a1a1a;letter-spacing:0.424px;transform:scaleX(0.8400);transform-origin:0.00px 0;">Нажмите `Выбрать` для выбора местоположения по умолчанию\File Example Avi 1280 1 5Mg (1).mp4</div>

<div class="r" style="left:748px;top:486px;width:45px;height:19px;background:#e1e1e1;border:1px solid #adadad"></div>
<div class="a t" style="left:755.50px;top:490.50px;color:#1a1a1a;letter-spacing:0.000px;transform:scaleX(0.8306);transform-origin:0.00px 0;font-weight:bold;">Browse</div>

<div class="a t" style="left:6.75px;top:525.50px;color:#1a1a1a;letter-spacing:0.213px;transform:scaleX(0.8400);transform-origin:0.00px 0;">Ready</div>

<div class="a t" style="left:673.75px;top:525.50px;color:#1a1a1a;letter-spacing:0.794px;transform:scaleX(0.8400);transform-origin:0.00px 0;font-weight:bold;">When Done:</div>

<div class="a t" style="left:735.75px;top:525.50px;color:#1a1a1a;letter-spacing:0.909px;transform:scaleX(0.8400);transform-origin:0.00px 0;">Do nothing</div>

<svg style="left:785px;top:529px" width="6" height="4" viewBox="0 0 6 4"><path d="M0 0H5.5L2.75 3Z" fill="#333"/></svg>
</body></html>
